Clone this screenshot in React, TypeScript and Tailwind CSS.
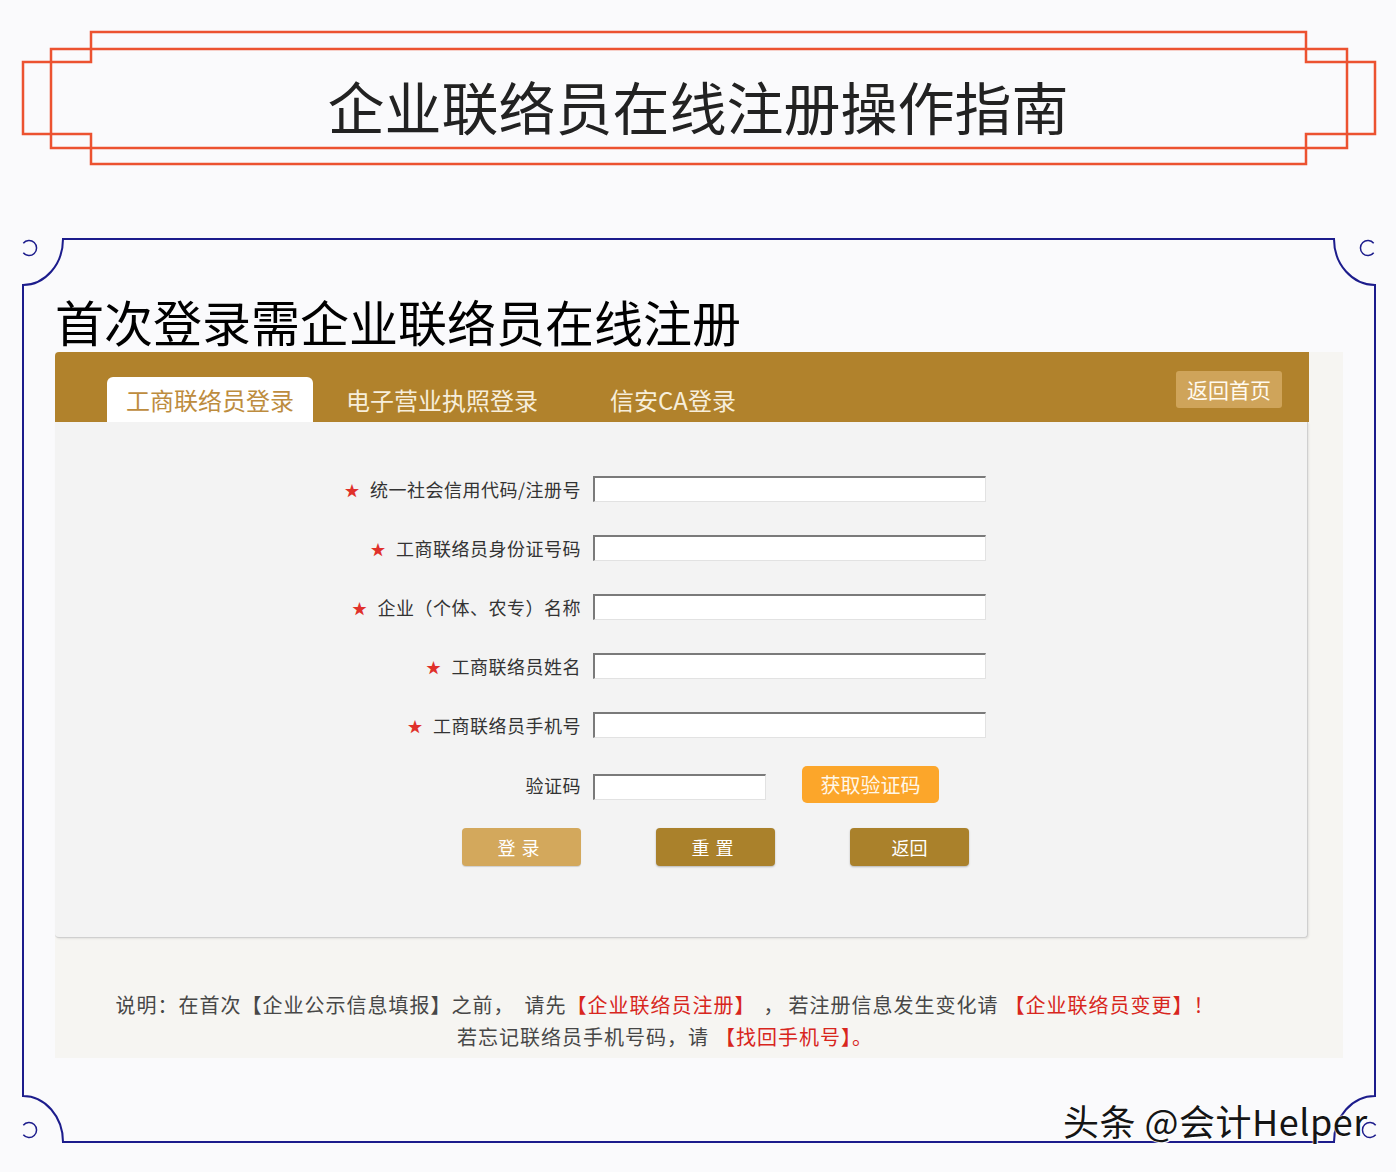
const cjk = { fontFamily: '"Noto Sans CJK SC", "Noto Sans", sans-serif' };

const fields = [
  "统一社会信用代码/注册号",
  "工商联络员身份证号码",
  "企业（个体、农专）名称",
  "工商联络员姓名",
  "工商联络员手机号",
];

function Banner() {
  return (
    <div className="relative flex h-[200px] justify-center pt-[77px]">
      <svg className="absolute left-0 top-0" width="1396" height="200" fill="none" stroke="#ec5230" strokeWidth="2.5">
        <path d="M91 32 H1306 V62 H1375 V134 H1306 V164 H91 V134 H23 V62 H91 Z" />
        <rect x="51" y="49" width="1296" height="99" />
      </svg>
      <h1 className="relative text-[57px] leading-none text-[#222]">企业联络员在线注册操作指南</h1>
    </div>
  );
}

function Frame() {
  const open = (cx: number, cy: number, left: boolean) =>
    left
      ? `M${cx - 5.7} ${cy - 4.8} A7.5 7.5 0 1 1 ${cx - 5.7} ${cy + 4.8}`
      : `M${cx + 5.7} ${cy - 4.8} A7.5 7.5 0 1 0 ${cx + 5.7} ${cy + 4.8}`;
  return (
    <svg className="absolute left-0 top-0" width="1396" height="972" viewBox="0 200 1396 972" fill="none" stroke="#1c1c8c" strokeWidth="2">
      <path d="M63 239 H1334 A41 46 0 0 0 1375 285 V1096 A41 46 0 0 0 1334 1142 H63 A40 46 0 0 0 23 1096 V285 A40 46 0 0 0 63 239 Z" />
      <path d={open(29, 248, true)} strokeWidth="1.5" />
      <path d={open(1368, 248, false)} strokeWidth="1.5" />
      <path d={open(29, 1130, true)} strokeWidth="1.5" />
      <path d={open(1370, 1130, false)} strokeWidth="1.5" />
    </svg>
  );
}

function Input({ w }: { w: string }) {
  return <div className={`${w} h-[26px] border-l-2 border-t-2 border-r border-b border-l-[#7a7a7a] border-t-[#7a7a7a] border-r-[#e2e2e2] border-b-[#e2e2e2] bg-white`} />;
}

function Gap({ w }: { w: string }) {
  return <span className={`inline-block ${w}`} />;
}

function LoginPanel() {
  return (
    <div className="mt-[7px] h-[706px] w-[1288px] bg-[#f6f5f2]">
      <div className="flex h-[70px] w-[1254px] items-end rounded-tl-[4px] bg-[#b1822c] pl-[52px]">
        <div className="flex h-[45px] w-[206px] items-center justify-center rounded-t-[6px] bg-white text-[24px] text-[#bd8c3e]">工商联络员登录</div>
        <div className="ml-[33px] flex h-[45px] items-center text-[24px] text-[#f7eedb]">电子营业执照登录</div>
        <div className="ml-[72px] flex h-[45px] items-center text-[24px] text-[#f7eedb]">信安CA登录</div>
        <div className="mb-[14px] ml-auto mr-[27px] flex h-[37px] w-[106px] items-center justify-center self-end rounded-[3px] bg-[#cfa45a] text-[21px] text-[#fffaf0]">返回首页</div>
      </div>
      <div className="h-[516px] w-[1253px] rounded-b-[4px] border-b border-r border-[#cfcfcf] bg-[#f3f3f3] pt-[54px] shadow-[1px_1px_2px_rgba(0,0,0,0.08)]">
        <div className="flex flex-col gap-[33px]">
          {fields.map((f) => (
            <div key={f} className="flex items-center">
              <div className="flex w-[526px] items-center justify-end text-[18px] leading-none tracking-[0.5px] text-[#333]">
                <span className="mr-[10px] text-[15px] text-[#e0302a]">★</span>
                {f}
              </div>
              <div className="ml-[12px]">
                <Input w="w-[393px]" />
              </div>
            </div>
          ))}
        </div>
        <div className="mt-[28px] flex items-center">
          <div className="w-[526px] text-right text-[18px] leading-none tracking-[0.5px] text-[#333]">验证码</div>
          <div className="ml-[12px] mt-[4px]">
            <Input w="w-[173px]" />
          </div>
          <div className="ml-[36px] flex h-[37px] w-[137px] items-center justify-center rounded-[5px] bg-[#fca62a] text-[20px] text-[#fff7e8]">获取验证码</div>
        </div>
        <div className="mt-[25px] flex gap-[75px] pl-[407px] text-[18px] text-white">
          <div className="flex h-[38px] w-[119px] items-center justify-center rounded-[4px] bg-[#d3a85c] tracking-[6px] shadow-[0_1px_1px_rgba(0,0,0,0.15)]">登录</div>
          <div className="flex h-[38px] w-[119px] items-center justify-center rounded-[4px] bg-[#aa812b] tracking-[6px] shadow-[0_1px_2px_rgba(0,0,0,0.25)]">重置</div>
          <div className="flex h-[38px] w-[119px] items-center justify-center rounded-[4px] bg-[#aa812b] shadow-[0_1px_2px_rgba(0,0,0,0.25)]">返回</div>
        </div>
      </div>
      <div className="ml-[60px] w-[1100px] pt-[51px] text-center text-[20px] leading-[32px] tracking-[1px] text-[#474747]">
        <div className="whitespace-nowrap">
          说明：在首次【企业公示信息填报】之前，<Gap w="w-[10px]" />请先<span className="text-[#d8261d]">【企业联络员注册】</span>
          <Gap w="w-[8px]" />，<Gap w="w-[4px]" />若注册信息发生变化请<Gap w="w-[6px]" />
          <span className="text-[#d8261d]">【企业联络员变更】！</span>
        </div>
        <div className="whitespace-nowrap">
          若忘记联络员手机号码，请<Gap w="w-[6px]" />
          <span className="text-[#d8261d]">【找回手机号】。</span>
        </div>
      </div>
    </div>
  );
}

export default function App() {
  return (
    <div className="relative h-[1172px] w-[1396px] overflow-hidden bg-[#fafafc]" style={cjk}>
      <Banner />
      <section className="relative h-[972px] pl-[55px] pt-[96px]">
        <Frame />
        <h2 className="relative text-[49px] leading-none text-black">首次登录需企业联络员在线注册</h2>
        <div className="relative">
          <LoginPanel />
        </div>
        <div className="absolute left-[1063px] top-[902px] whitespace-nowrap text-[36px] leading-none tracking-[0.5px] text-[#151515] [text-shadow:0_0_2px_#fff,0_0_2px_#fff,1px_1px_0_#fff]">
          头条 @会计Helper
        </div>
      </section>
    </div>
  );
}
